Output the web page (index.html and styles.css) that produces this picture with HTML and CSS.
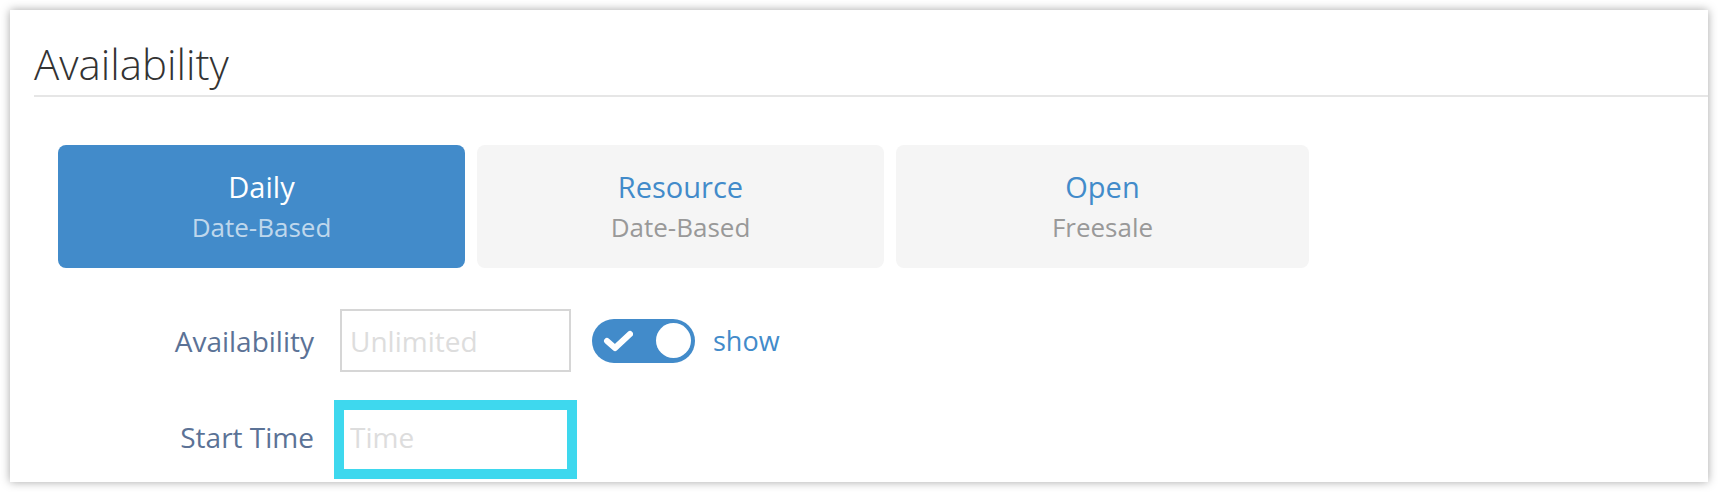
FILE: index.html
```html
<!DOCTYPE html>
<html lang="en">
<head>
    <meta charset="UTF-8">
    <meta name="viewport" content="width=device-width, initial-scale=1.0">
    <title>Availability</title>
    <link rel="stylesheet" href="styles.css">
</head>
<body>
    <div class="panel">
        <h2 class="panel-title">Availability</h2>
        <div class="type-tabs">
            <button class="type-tab active">
                <span class="tab-name">Daily</span>
                <span class="tab-sub">Date-Based</span>
            </button>
            <button class="type-tab">
                <span class="tab-name">Resource</span>
                <span class="tab-sub">Date-Based</span>
            </button>
            <button class="type-tab wide">
                <span class="tab-name">Open</span>
                <span class="tab-sub">Freesale</span>
            </button>
        </div>
        <div class="form-rows">
            <div class="form-row">
                <label class="form-label" for="availability">Availability</label>
                <input type="text" id="availability" class="form-input" placeholder="Unlimited">
                <span class="toggle">
                    <svg class="toggle-check" width="30" height="22" viewBox="0 0 30 22">
                        <path d="M4 11 L12 18 L27 4" fill="none" stroke="#fff" stroke-width="6" stroke-linecap="round" stroke-linejoin="round"/>
                    </svg>
                    <span class="toggle-knob"></span>
                </span>
                <span class="toggle-label">show</span>
            </div>
            <div class="form-row raised">
                <label class="form-label" for="start-time">Start Time</label>
                <input type="text" id="start-time" class="form-input highlighted" placeholder="Time">
            </div>
        </div>
    </div>
</body>
</html>
```

FILE: styles.css
```css
body {
    font-family: "Open Sans", Arial, sans-serif;
    background-color: #fff;
    margin: 0;
}
.panel {
    margin: 10px;
    height: 472px;
    box-sizing: border-box;
    padding: 26px 0 0 24px;
    background-color: #fff;
    box-shadow: 0 0 9px rgba(0, 0, 0, 0.35);
}
.panel-title {
    margin: 0;
    padding-bottom: 4px;
    border-bottom: 2px solid #e6e6e6;
    font-size: 42px;
    font-weight: 300;
    line-height: 55px;
    color: #333;
}
.type-tabs {
    display: flex;
    gap: 12px;
    margin: 48px 0 0 24px;
}
.type-tab {
    display: flex;
    flex-direction: column;
    align-items: center;
    width: 407px;
    height: 123px;
    padding: 22px 0 0;
    border: none;
    border-radius: 8px;
    background-color: #f5f5f5;
    font-family: inherit;
    cursor: pointer;
}
.type-tab.wide {
    width: 413px;
}
.type-tab .tab-name {
    font-size: 29px;
    line-height: 39px;
    color: #428bca;
}
.type-tab .tab-sub {
    margin-top: 4px;
    font-size: 26px;
    line-height: 35px;
    color: #999;
}
.type-tab.active {
    background-color: #428bca;
}
.type-tab.active .tab-name {
    color: #fff;
}
.type-tab.active .tab-sub {
    color: rgba(255, 255, 255, 0.68);
}
.form-rows {
    display: flex;
    flex-direction: column;
    gap: 34px;
    margin: 41px 0 0 24px;
}
.form-row {
    display: flex;
    align-items: center;
}
.form-label {
    width: 256px;
    margin-right: 26px;
    text-align: right;
    font-size: 28px;
    color: #5b7296;
}
.form-row.raised .form-label {
    margin-bottom: 6px;
}
.form-input {
    width: 231px;
    height: 63px;
    box-sizing: border-box;
    padding: 0 8px;
    border: 2px solid #d6d6d6;
    font-family: inherit;
    font-size: 28px;
    color: #555;
}
.form-input::placeholder {
    color: #ddd;
}
.form-input.highlighted {
    height: 67px;
    padding-bottom: 6px;
    outline: 10px solid #3ed8ee;
    outline-offset: -4px;
    box-shadow: inset 0 -6px 0 -4px #bbb;
}
.toggle {
    display: flex;
    align-items: center;
    justify-content: space-between;
    width: 103px;
    height: 44px;
    box-sizing: border-box;
    margin-left: 21px;
    padding: 0 4px 0 11px;
    border-radius: 22px;
    background-color: #428bca;
}
.toggle-knob {
    width: 35px;
    height: 35px;
    border-radius: 50%;
    background-color: #fff;
}
.toggle-label {
    margin-left: 18px;
    font-size: 27px;
    color: #428bca;
}
```
